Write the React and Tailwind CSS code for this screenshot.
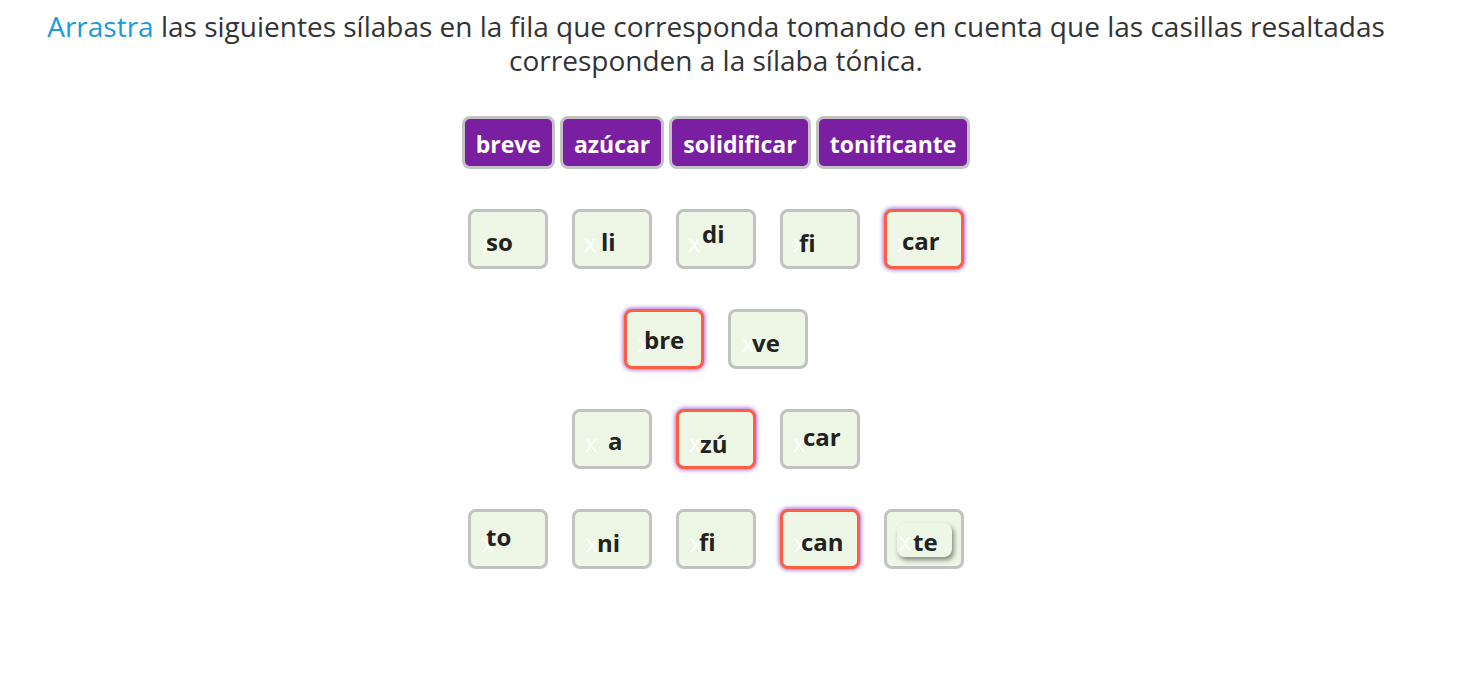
import React from "react";

const font = { fontFamily: '"Open Sans", "Noto Sans", sans-serif' };

function Box({ hl, xCls, sCls, text, chip }) {
  return (
    <div
      className={
        "relative w-20 h-[60px] rounded-lg border-[3px] bg-[#eef6e5] " +
        (hl
          ? "border-[#ff5e45] shadow-[0_0_4px_1px_#a36bd6]"
          : "border-[#c2c2c2]")
      }
    >
      {chip ? (
        <div className="absolute left-[10px] top-[11px] w-[55px] h-[34px] rounded-lg bg-[#eef6e5] shadow-[2px_3px_5px_rgba(0,0,0,0.45)] flex items-center pl-[2px] pt-[3px]">
          <span className="text-[23px] leading-none text-white">x</span>
          <span className="ml-[2px] text-[24px] leading-none font-bold text-[#222]">{text}</span>
        </div>
      ) : (
        <>
          <span className={"absolute text-[23px] leading-none text-white " + xCls}>x</span>
          <span className={"absolute text-[24px] leading-none font-bold text-[#222] " + sCls}>{text}</span>
        </>
      )}
    </div>
  );
}

const rows = [
  [
    { text: "so", xCls: "left-[11px] top-[20px]", sCls: "left-[15px] top-[18px]" },
    { text: "li", xCls: "left-[9px] top-[20px]", sCls: "left-[26px] top-[18px]" },
    { text: "di", xCls: "left-[9px] top-[20px]", sCls: "left-[23px] top-[10px]" },
    { text: "fi", xCls: "left-[10px] top-[20px]", sCls: "left-[16px] top-[19px]" },
    { text: "car", hl: true, xCls: "left-[10px] top-[20px]", sCls: "left-[15px] top-[17px]" },
  ],
  [
    { text: "bre", hl: true, xCls: "left-[11px] top-[20px]", sCls: "left-[17px] top-[16px]" },
    { text: "ve", xCls: "left-[11px] top-[20px]", sCls: "left-[21px] top-[19px]" },
  ],
  [
    { text: "a", xCls: "left-[10px] top-[20px]", sCls: "left-[33px] top-[17px]" },
    { text: "zú", hl: true, xCls: "left-[10px] top-[20px]", sCls: "left-[21px] top-[20px]" },
    { text: "car", xCls: "left-[10px] top-[20px]", sCls: "left-[20px] top-[13px]" },
  ],
  [
    { text: "to", xCls: "left-[11px] top-[20px]", sCls: "left-[15px] top-[13px]" },
    { text: "ni", xCls: "left-[11px] top-[20px]", sCls: "left-[22px] top-[19px]" },
    { text: "fi", xCls: "left-[11px] top-[20px]", sCls: "left-[20px] top-[18px]" },
    { text: "can", hl: true, xCls: "left-[11px] top-[20px]", sCls: "left-[18px] top-[18px]" },
    { text: "te", chip: true },
  ],
];

const words = ["breve", "azúcar", "solidificar", "tonificante"];

export default function App() {
  return (
    <div className="w-[1432px] h-[673px] bg-white text-center" style={font}>
      <p className="pt-[10px] text-[28px] leading-[33.5px] text-[#333]">
        <span className="text-[#1a9ad9]">Arrastra</span> las siguientes sílabas en la fila que
        corresponda tomando en cuenta que las casillas resaltadas
        <br />
        corresponden a la sílaba tónica.
      </p>
      <div className="mt-[39px] flex justify-center gap-[5px]">
        {words.map((w) => (
          <div
            key={w}
            className="h-[53px] px-[11px] pt-[3px] flex items-center rounded-lg border-[3px] border-[#c2c2c2] bg-[#7b1fa2] text-[23px] font-bold text-white"
          >
            {w}
          </div>
        ))}
      </div>
      <div className="mt-[40px] flex flex-col items-center gap-[40px]">
        {rows.map((r, i) => (
          <div key={i} className="flex justify-center gap-6">
            {r.map((b, j) => (
              <Box key={j} {...b} />
            ))}
          </div>
        ))}
      </div>
    </div>
  );
}
